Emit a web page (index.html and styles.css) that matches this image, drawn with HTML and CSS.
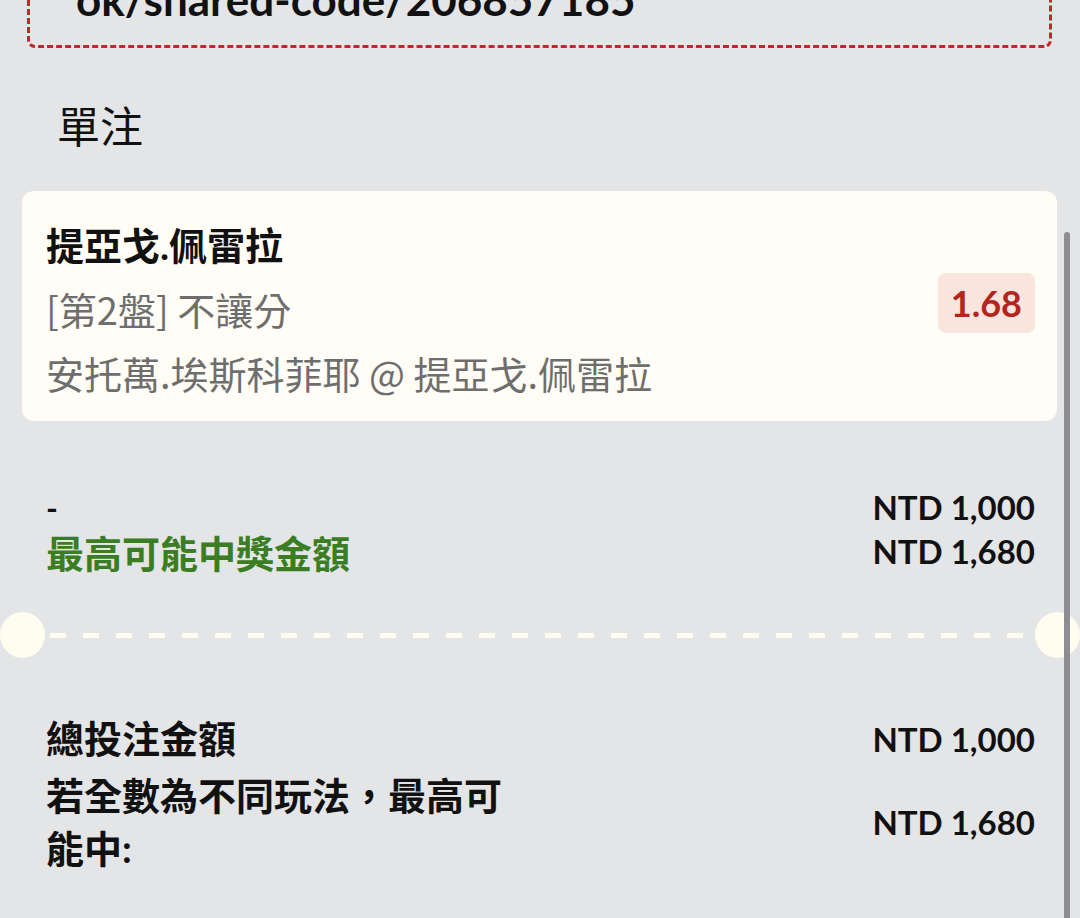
FILE: index.html
```html
<!DOCTYPE html>
<html lang="zh-Hant">
<head>
<meta charset="utf-8">
<title>單注</title>
<link rel="stylesheet" href="styles.css">
</head>
<body>
<div class="page">
  <div class="link-box">
    <span class="link-text">ok/shared-code/206857185</span>
  </div>

  <h2 class="section-title">單注</h2>

  <div class="bet-card">
    <div class="bet-info">
      <div class="bet-title">提亞戈.佩雷拉</div>
      <div class="bet-line">[第2盤] 不讓分</div>
      <div class="bet-line">安托萬.埃斯科菲耶 @ 提亞戈.佩雷拉</div>
    </div>
    <div class="odds-badge">1.68</div>
  </div>

  <div class="stake-block">
    <div class="row">
      <span class="label-dash">-</span>
      <span class="amount">NTD 1,000</span>
    </div>
    <div class="row">
      <span class="label-green">最高可能中獎金額</span>
      <span class="amount">NTD 1,680</span>
    </div>
  </div>

  <div class="separator">
    <span class="notch notch-left"></span>
    <span class="dash-line"></span>
    <span class="notch notch-right"></span>
  </div>

  <div class="total-block">
    <div class="total-row">
      <span class="total-label">總投注金額</span>
      <span class="amount">NTD 1,000</span>
    </div>
    <div class="total-row">
      <span class="total-label wrap">若全數為不同玩法，最高可能中:</span>
      <span class="amount">NTD 1,680</span>
    </div>
  </div>

  <div class="scrollbar"></div>
</div>
</body>
</html>
```

FILE: styles.css
```css
* { box-sizing: border-box; }

html, body {
  margin: 0;
  padding: 0;
}

body {
  background: #e4e5e7;
  font-family: Lato, "Noto Sans CJK TC", sans-serif;
  color: #111;
  overflow: hidden;
}

.page {
  position: relative;
  width: 1080px;
  height: 918px;
  overflow: hidden;
}

.link-box {
  margin: -100px 28px 0 27px;
  height: 148px;
  border: 3px dashed #c0282d;
  border-radius: 8px;
  padding: 0 0 21px 46px;
  display: flex;
  align-items: flex-end;
}

.link-text {
  font-family: Lato, sans-serif;
  font-weight: 700;
  font-size: 44px;
  line-height: 50px;
  color: #111;
}

.section-title {
  margin: 49px 0 0 57px;
  font-size: 43px;
  font-weight: 400;
  line-height: 59px;
  color: #111;
}

.bet-card {
  margin: 35px 23px 0 22px;
  background: #fffdf5;
  border-radius: 12px;
  padding: 22px 22px 16px 24px;
  display: flex;
  align-items: center;
  justify-content: space-between;
}

.bet-title {
  font-size: 38px;
  font-weight: 700;
  line-height: 64px;
  color: #111;
}

.bet-line {
  font-family: "Noto Sans CJK TC", sans-serif;
  font-size: 38px;
  font-weight: 400;
  line-height: 64px;
  color: #6e6e6e;
}

.odds-badge {
  background: #f7e5de;
  color: #b3261e;
  font-family: Lato, sans-serif;
  font-weight: 700;
  font-size: 36px;
  line-height: 60px;
  padding: 0 13px;
  border-radius: 8px;
  margin-bottom: 12px;
}

.stake-block {
  margin-top: 64px;
  padding: 0 45px 0 46px;
}

.row {
  display: flex;
  justify-content: space-between;
  align-items: center;
  height: 44px;
}

.label-dash {
  font-size: 32px;
  font-weight: 700;
}

.label-green {
  font-size: 38px;
  font-weight: 700;
  color: #3b7d23;
}

.amount {
  font-family: Lato, sans-serif;
  font-weight: 700;
  font-size: 33px;
  color: #111;
  white-space: nowrap;
}

.separator {
  position: relative;
  margin-top: 39px;
  height: 46px;
  display: flex;
  align-items: center;
  padding: 0 48px 0 50px;
}

.dash-line {
  flex: 1;
  height: 5px;
  background: repeating-linear-gradient(90deg, #fffdf0 0 16px, transparent 16px 33px);
}

.notch {
  position: absolute;
  top: 0;
  width: 45px;
  height: 46px;
  border-radius: 50%;
  background: #fffdf0;
}

.notch-left { left: 0; }
.notch-right { left: 1035px; }

.total-block {
  margin-top: 54px;
  padding: 0 45px 0 46px;
  display: flex;
  flex-direction: column;
  gap: 4px;
}

.total-row {
  display: flex;
  justify-content: space-between;
  align-items: center;
}

.total-label {
  font-size: 38px;
  font-weight: 700;
  line-height: 53px;
}

.total-label.wrap {
  max-width: 475px;
}

.scrollbar {
  position: absolute;
  left: 1064px;
  top: 232px;
  width: 6px;
  height: 720px;
  border-radius: 3px;
  background: #8e8e92;
}
```
